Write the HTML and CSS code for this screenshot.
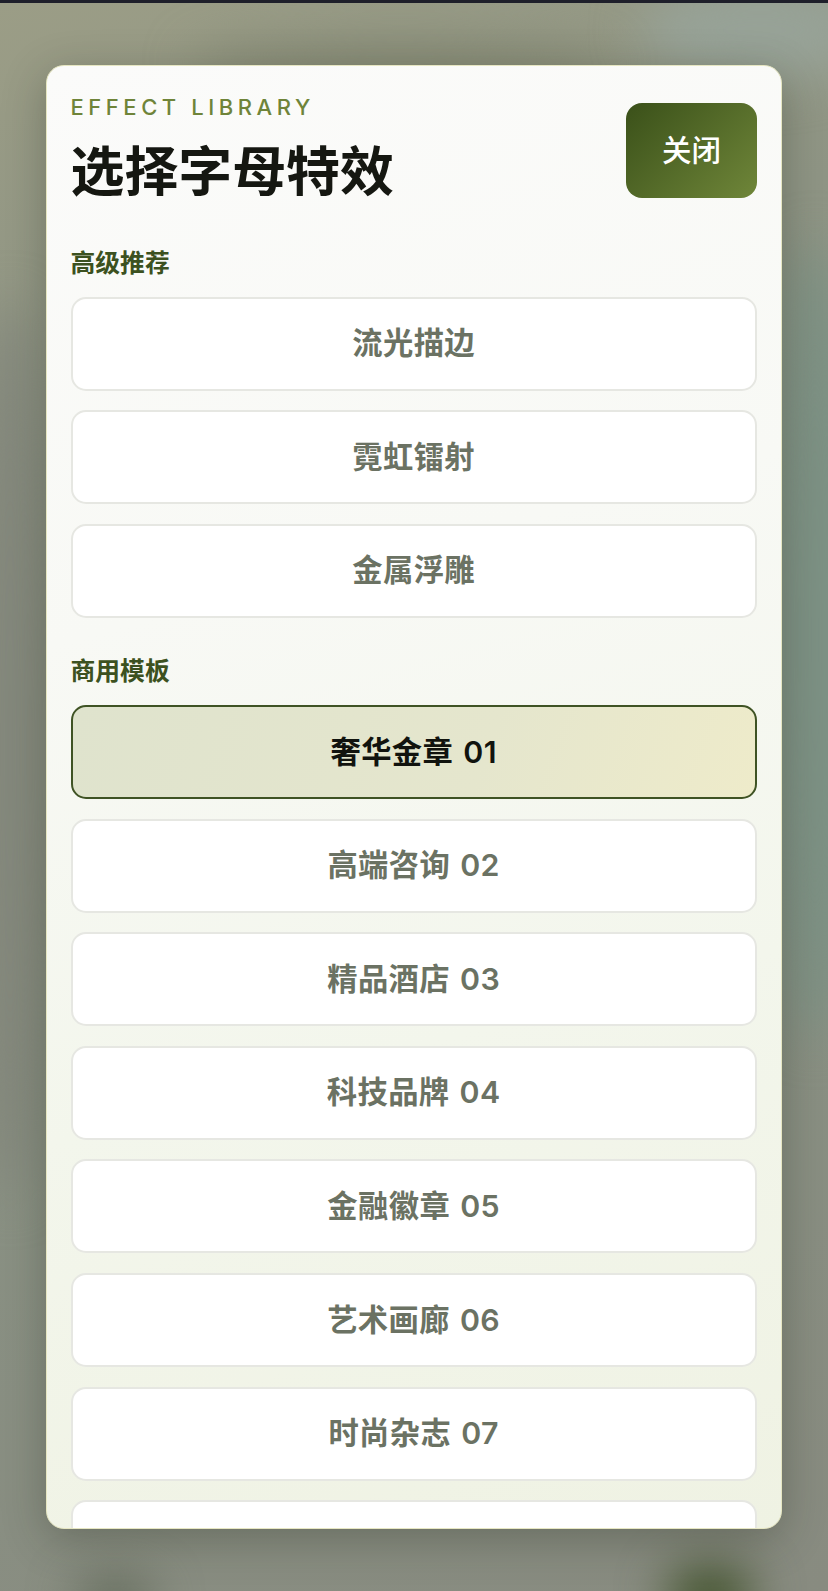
FILE: index.html
```html
<!DOCTYPE html>
<html lang="zh-CN">
<head>
<meta charset="utf-8">
<title>选择字母特效</title>
<link rel="stylesheet" href="styles.css">
</head>
<body>
<div class="status-strip"></div>
<div class="backdrop" aria-hidden="true">
  <span class="blob blob-top"></span>
  <span class="blob blob-top2"></span>
  <span class="blob blob-left"></span>
  <span class="blob blob-right"></span>
  <span class="blob blob-br"></span>
  <span class="blob blob-bl"></span>
</div>
<main class="panel">
  <header class="panel-head">
    <div class="head-text">
      <p class="eyebrow">EFFECT LIBRARY</p>
      <h1 class="title">选择字母特效</h1>
    </div>
    <button class="close">关闭</button>
  </header>
  <section class="group group-first">
    <h2 class="group-label">高级推荐</h2>
    <div class="list">
      <button class="item">流光描边</button>
      <button class="item">霓虹镭射</button>
      <button class="item">金属浮雕</button>
    </div>
  </section>
  <section class="group">
    <h2 class="group-label">商用模板</h2>
    <div class="list">
      <button class="item item-active">奢华金章 01</button>
      <button class="item">高端咨询 02</button>
      <button class="item">精品酒店 03</button>
      <button class="item">科技品牌 04</button>
      <button class="item">金融徽章 05</button>
      <button class="item">艺术画廊 06</button>
      <button class="item">时尚杂志 07</button>
      <button class="item">&nbsp;</button>
    </div>
  </section>
</main>
</body>
</html>
```
FILE: styles.css
```css
* { box-sizing: border-box; }
html, body { margin: 0; height: 100%; }
body {
  position: relative;
  height: 1591px;
  overflow: hidden;
  padding: 65px 46px 0;
  font-family: "Inter", "Noto Sans CJK SC", sans-serif;
  background: linear-gradient(160deg, #9b9d86 0%, #8f9585 25%, #8a9284 55%, #888b80 100%);
}
.status-strip {
  position: absolute;
  top: 0; left: 0; right: 0;
  height: 3px;
  background: #1e1f2a;
  z-index: 3;
}
.backdrop {
  position: absolute;
  inset: 0;
  overflow: hidden;
}
.blob {
  position: absolute;
  border-radius: 50%;
  filter: blur(24px);
}
.blob-top { left: 190px; top: 40px; width: 420px; height: 50px; background: #858974; }
.blob-top2 { left: 640px; top: -20px; width: 240px; height: 100px; background: #97a297; }
.blob-left { left: -40px; top: 300px; width: 100px; height: 900px; background: #84887c; }
.blob-right { left: 770px; top: 240px; width: 90px; height: 800px; background: #7c9184; }
.blob-br { left: 665px; top: 1566px; width: 90px; height: 60px; background: #3f5029; }
.blob-bl { left: 75px; top: 1580px; width: 80px; height: 40px; background: #5a6352; }
.panel {
  position: relative;
  z-index: 2;
  height: 1464px;
  overflow: hidden;
  padding: 0 24.2px 0 23.5px;
  border: 1.5px solid #e6e6c2;
  border-radius: 18px;
  background: linear-gradient(165deg, #fbfbfa 0%, #f8f9f5 35%, #f3f6ec 65%, #eff2e3 100%);
  box-shadow: 0 10px 44px rgba(30, 36, 24, 0.3);
}
.panel-head {
  display: flex;
  justify-content: space-between;
  align-items: flex-start;
  padding-top: 27.5px;
}
.head-text { min-width: 0; }
.eyebrow {
  margin: 0;
  font-family: "Inter", "Liberation Sans", sans-serif;
  font-size: 22px;
  line-height: 27px;
  letter-spacing: 4.55px;
  font-weight: 500;
  color: #6f8439;
}
.title {
  margin: 15.5px 0 0;
  font-family: "Noto Sans CJK SC", sans-serif;
  font-size: 53.9px;
  line-height: 64px;
  font-weight: 700;
  color: #151711;
}
.close {
  margin-top: 9px;
  padding: 0 0 5px;
  width: 130.5px;
  height: 95px;
  border: 0;
  border-radius: 16px;
  background: linear-gradient(135deg, #3a5019 0%, #6f8639 100%);
  color: #fff;
  font-family: "Noto Sans CJK SC", sans-serif;
  font-size: 29.5px;
  font-weight: 500;
}
.group { margin-top: 34.4px; }
.group.group-first { margin-top: 43.5px; }
.group-label {
  margin: 0 0 19px;
  font-family: "Noto Sans CJK SC", sans-serif;
  font-size: 24.8px;
  line-height: 34px;
  font-weight: 700;
  color: #3c5120;
}
.list {
  display: flex;
  flex-direction: column;
  gap: 19.6px;
}
.item {
  flex: none;
  width: 100%;
  height: 94px;
  padding: 0 0 5px;
  border: 2px solid #e6e7e2;
  border-radius: 15px;
  background: #fff;
  color: #6b7263;
  font-family: "Inter", "Noto Sans CJK SC", sans-serif;
  font-size: 30.3px;
  font-weight: 600;
  letter-spacing: 0.4px;
  word-spacing: 2px;
}
.item-active {
  border-color: #3f5324;
  background: linear-gradient(110deg, #dfe3cd 0%, #e5e6cd 60%, #eeebca 100%);
  color: #11130e;
}
```
